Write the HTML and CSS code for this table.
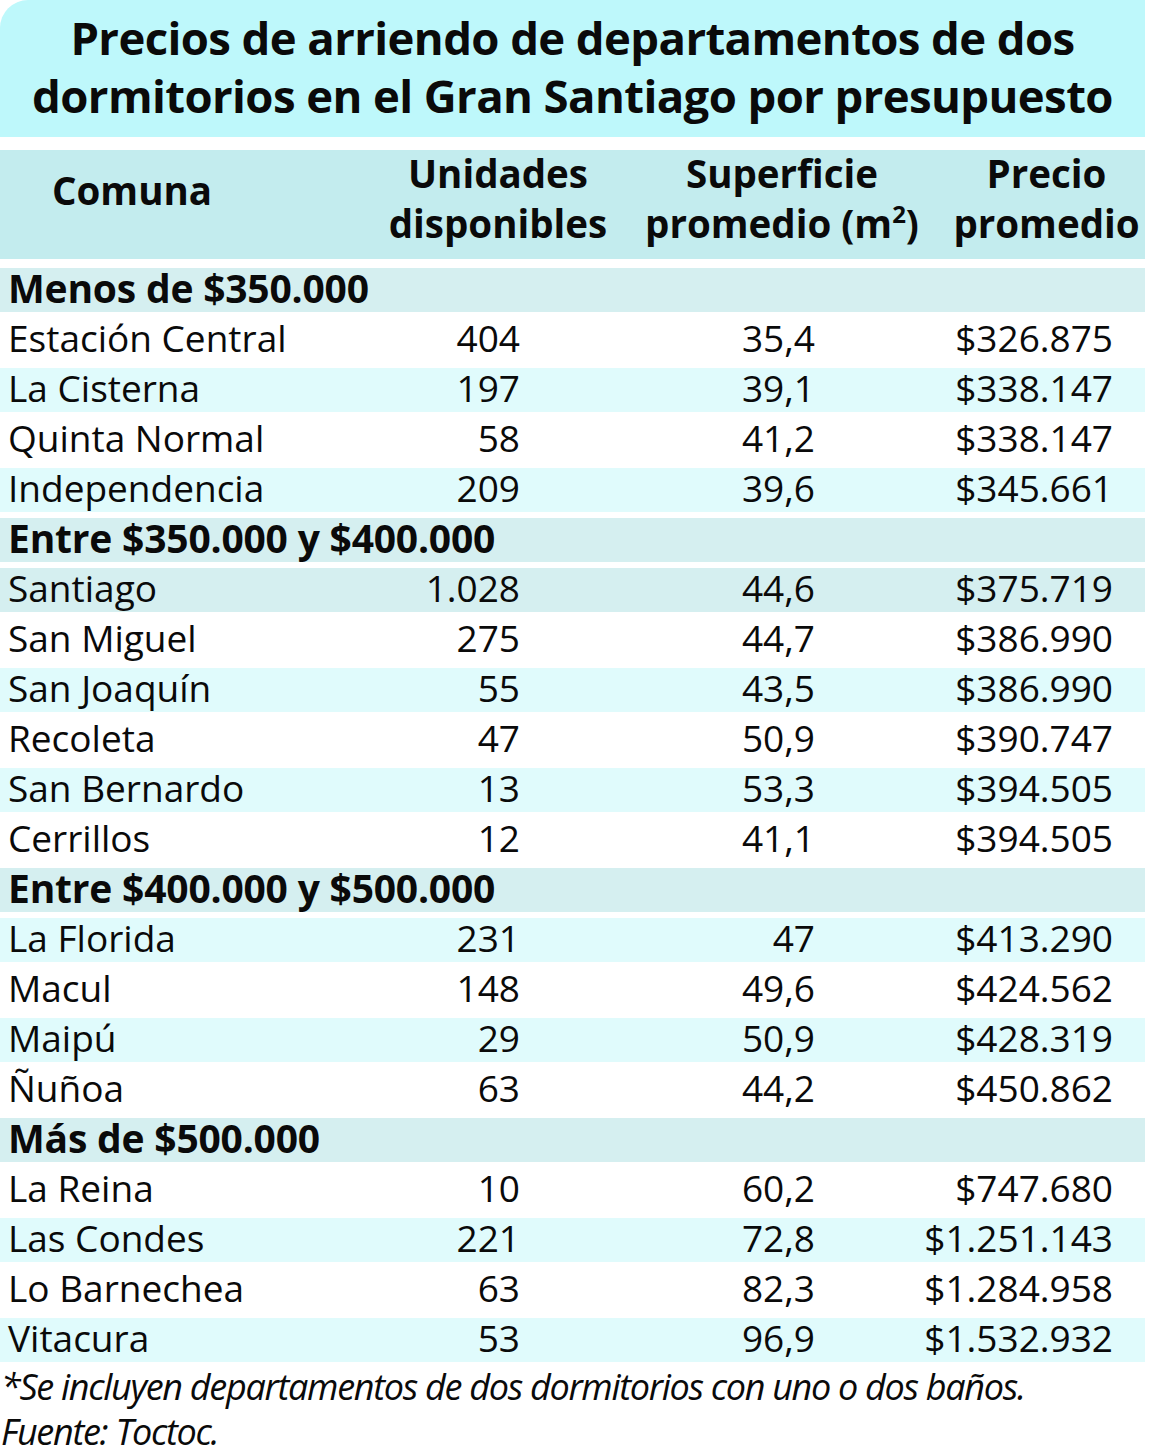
FILE: index.html
```html
<!DOCTYPE html>
<html lang="es">
<head>
<meta charset="utf-8">
<title>Precios de arriendo</title>
<link rel="stylesheet" href="styles.css">
</head>
<body>
<div class="sheet">
  <div class="title">
    <div class="title-line">Precios de arriendo de departamentos de dos</div>
    <div class="title-line">dormitorios en el Gran Santiago por presupuesto</div>
  </div>
  <div class="head">
    <div class="h h1">Comuna</div>
    <div class="h h2">Unidades<br>disponibles</div>
    <div class="h h3">Superficie<br>promedio (m<sup>2</sup>)</div>
    <div class="h h4">Precio<br>promedio</div>
  </div>
  <div class="body">
    <div class="sec">Menos de $350.000</div>
    <div class="row"><span>Estación Central</span><span>404</span><span>35,4</span><span>$326.875</span></div>
    <div class="row alt"><span>La Cisterna</span><span>197</span><span>39,1</span><span>$338.147</span></div>
    <div class="row"><span>Quinta Normal</span><span>58</span><span>41,2</span><span>$338.147</span></div>
    <div class="row alt"><span>Independencia</span><span>209</span><span>39,6</span><span>$345.661</span></div>
    <div class="sec">Entre $350.000 y $400.000</div>
    <div class="row dim"><span>Santiago</span><span>1.028</span><span>44,6</span><span>$375.719</span></div>
    <div class="row"><span>San Miguel</span><span>275</span><span>44,7</span><span>$386.990</span></div>
    <div class="row alt"><span>San Joaquín</span><span>55</span><span>43,5</span><span>$386.990</span></div>
    <div class="row"><span>Recoleta</span><span>47</span><span>50,9</span><span>$390.747</span></div>
    <div class="row alt"><span>San Bernardo</span><span>13</span><span>53,3</span><span>$394.505</span></div>
    <div class="row"><span>Cerrillos</span><span>12</span><span>41,1</span><span>$394.505</span></div>
    <div class="sec">Entre $400.000 y $500.000</div>
    <div class="row alt"><span>La Florida</span><span>231</span><span>47</span><span>$413.290</span></div>
    <div class="row"><span>Macul</span><span>148</span><span>49,6</span><span>$424.562</span></div>
    <div class="row alt"><span>Maipú</span><span>29</span><span>50,9</span><span>$428.319</span></div>
    <div class="row"><span>Ñuñoa</span><span>63</span><span>44,2</span><span>$450.862</span></div>
    <div class="sec">Más de $500.000</div>
    <div class="row"><span>La Reina</span><span>10</span><span>60,2</span><span>$747.680</span></div>
    <div class="row alt"><span>Las Condes</span><span>221</span><span>72,8</span><span>$1.251.143</span></div>
    <div class="row"><span>Lo Barnechea</span><span>63</span><span>82,3</span><span>$1.284.958</span></div>
    <div class="row alt"><span>Vitacura</span><span>53</span><span>96,9</span><span>$1.532.932</span></div>
  </div>
  <div class="foot">
    <div class="note">*Se incluyen departamentos de dos dormitorios con uno o dos baños.</div>
    <div class="note">Fuente: Toctoc.</div>
  </div>
</div>
</body>
</html>
```
FILE: styles.css
```css
html, body {
  margin: 0;
  padding: 0;
  background: #ffffff;
}
body {
  font-family: "Open Sans", "Noto Sans", sans-serif;
  color: #0a0a0a;
}
.sheet {
  width: 1145px;
}
.title {
  background: #bef8fb;
  border-top-left-radius: 28px;
  height: 137px;
  box-sizing: border-box;
  padding-top: 8px;
  text-align: center;
  font-weight: 700;
  font-size: 45.5px;
  line-height: 58px;
  letter-spacing: -0.6px;
}
.head {
  margin-top: 13px;
  height: 109px;
  box-sizing: border-box;
  padding-bottom: 14px;
  background: #c3ecee;
  display: flex;
  align-items: center;
  font-weight: 700;
  font-size: 38.5px;
  line-height: 50px;
}
.h {
  text-align: center;
  white-space: nowrap;
}
.h1 { width: 264px; padding-bottom: 16px; }
.h2 { width: 236px; margin-left: 116px; }
.h3 { width: 284px; margin-left: 24px; }
.h4 { width: 197px; margin-left: 24px; }
.h sup {
  font-size: 24px;
  line-height: 0;
  vertical-align: 15px;
}
.body {
  margin-top: 5px;
}
.row, .sec {
  height: 50px;
  box-sizing: border-box;
  border-top: 4px solid #fff;
  border-bottom: 2px solid #fff;
  font-size: 37px;
  line-height: 40px;
}
.row {
  display: grid;
  grid-template-columns: 342px 170px 295px 298px;
  padding: 0 32px 0 8px;
}
.row span:not(:first-child) {
  text-align: right;
}
.alt { background: #e0fbfc; }
.dim { background: #d5eff0; }
.sec {
  background: #d5eff0;
  font-weight: 700;
  font-size: 39px;
  padding-left: 8px;
  letter-spacing: -0.2px;
}
.foot {
  padding-left: 1px;
  font-style: italic;
  font-size: 36px;
  line-height: 45px;
  letter-spacing: -1.3px;
}
```
